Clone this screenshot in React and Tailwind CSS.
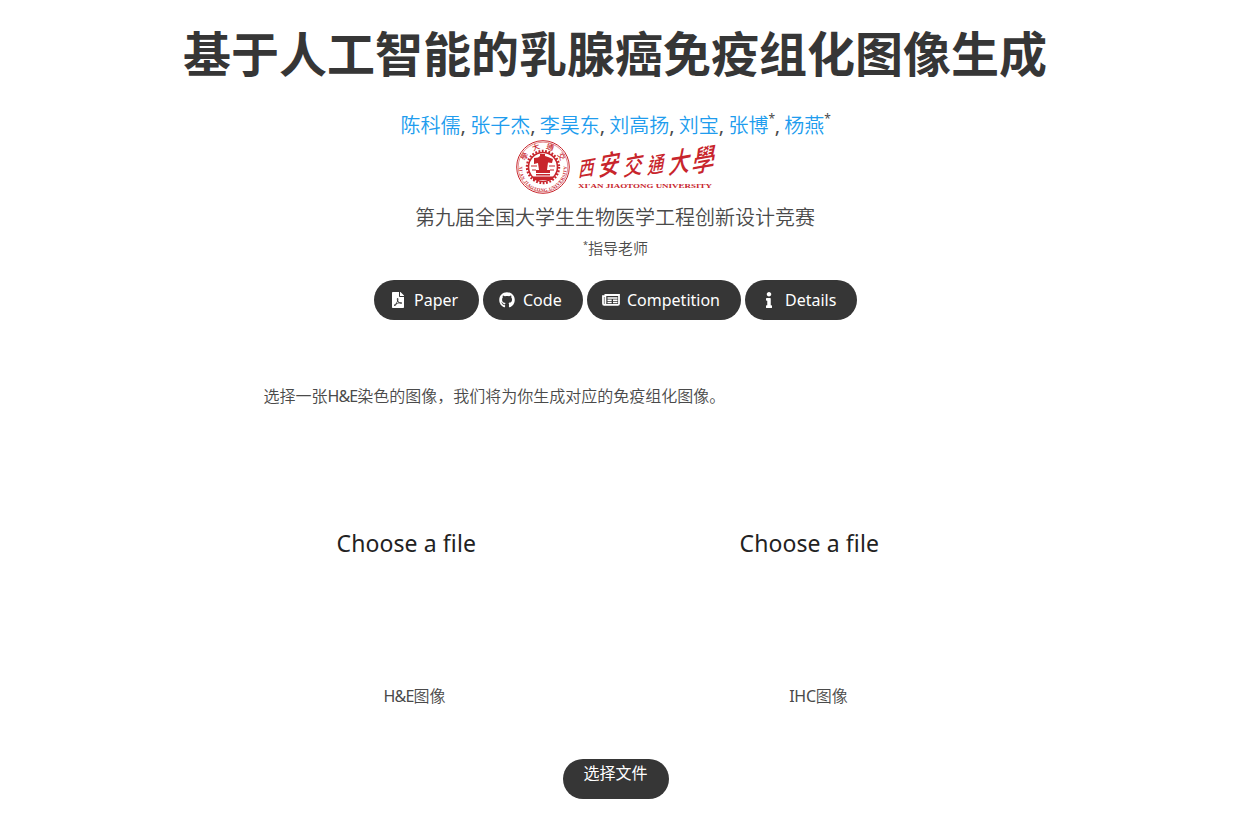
import { FaFilePdf, FaGithub, FaInfo } from "react-icons/fa";

function NewspaperIcon() {
  return (
    <svg width="18" height="16" viewBox="0 0 18 16" fill="none" stroke="currentColor">
      <path d="M3 4.2H1v7.3c0 .9.4 1.4 1.2 1.4h13.6c.8 0 1.2-.4 1.2-1.2V3H3.4v8.5c0 .9-.4 1.4-1.2 1.4" strokeWidth="1.8" />
      <path d="M5.5 5.9h10M5.5 8.3h4.2M11 8.3h4.5M5.5 10.6h4.2M11 10.6h4.5" strokeWidth="1.5" />
    </svg>
  );
}

const authors = [
  { name: "陈科儒" },
  { name: "张子杰" },
  { name: "李昊东" },
  { name: "刘高扬" },
  { name: "刘宝" },
  { name: "张博", mentor: true },
  { name: "杨燕", mentor: true },
];

const links = [
  { label: "Paper", Icon: FaFilePdf, width: "w-[105px]" },
  { label: "Code", Icon: FaGithub, width: "w-[100px]" },
  { label: "Competition", Icon: NewspaperIcon, width: "w-[154px]" },
  { label: "Details", Icon: FaInfo, width: "w-[112px]" },
];

const glyphs = [
  ["西", 62, 37, 20],
  ["安", 82, 36, 26],
  ["交", 107, 36, 24],
  ["通", 131, 34, 21],
  ["大", 152, 34, 27],
  ["學", 175, 33, 29],
];

function UniversityLogo() {
  return (
    <svg className="overflow-visible" width="204" height="54" viewBox="0 0 204 54" fill="#c8252c">
      <defs>
        <path id="sealTop" d="M8.5 27a18.5 18.5 0 0 1 37 0" />
        <path id="sealBottom" d="M3.7 23a23.8 23.8 0 1 0 46.6 0" />
      </defs>
      <circle cx="27" cy="27" r="26.3" fill="none" stroke="#c8252c" strokeWidth="1" />
      <circle cx="27" cy="27" r="24.8" fill="none" stroke="#c8252c" strokeWidth="0.5" />
      <circle cx="27" cy="27" r="16" fill="none" stroke="#c8252c" strokeWidth="2.4" strokeDasharray="1.8 1.55" />
      <circle cx="27" cy="27" r="14.5" fill="none" stroke="#c8252c" strokeWidth="1.6" />
      <path d="M18 18l4-.5 2-1.5v-2h5v2l3 1 5 2-1 4-4-.5-1 7.5h3v3H20v-3h3l-1-7-4 1z" />
      <path d="M20 34h14v1.5H20zM17 36.5h20V40H17z" />
      <path d="M15 26h6M33 26h6M16 30h4M34 30h4" stroke="#c8252c" strokeWidth="1.2" />
      <text fontFamily="'Noto Sans CJK TC', sans-serif" fontSize="7.5" fontWeight="500">
        <textPath href="#sealTop" startOffset="50%" textAnchor="middle" textLength="46">學大通交</textPath>
      </text>
      <text fontFamily="'Liberation Serif', serif" fontSize="4.6" fontWeight="700">
        <textPath href="#sealBottom" startOffset="50%" textAnchor="middle" textLength="78">XI'AN JIAOTONG UNIVERSITY</textPath>
      </text>
      <g fontFamily="'Liberation Serif', 'Noto Sans CJK TC', serif" fontWeight="500">
        {glyphs.map(([char, x, y, size]) => (
          <text key={char} fontSize={size} transform={`translate(${x} ${y}) rotate(-10) skewX(-20) scale(.8 1)`}>
            {char}
          </text>
        ))}
      </g>
      <text x="62" y="48.3" fontFamily="'Liberation Serif', serif" fontSize="7" fontWeight="700" textLength="134" lengthAdjust="spacingAndGlyphs">
        XI'AN JIAOTONG UNIVERSITY
      </text>
    </svg>
  );
}

function Preview({ children }) {
  return (
    <figure className="flex w-[403px] shrink-0 flex-col">
      <div className="flex h-[276px] items-center pl-[73px] pb-1.5 font-['Noto_Sans'] text-[23px] font-normal tracking-[0.1px] text-[#222]">
        <span className="whitespace-nowrap">Choose a file</span>
      </div>
      <figcaption className="w-[302px] text-center text-base leading-6">{children}</figcaption>
    </figure>
  );
}

export default function App() {
  return (
    <main className="flex h-[838px] w-[1231px] flex-col items-center overflow-hidden bg-white pt-6 font-['Noto_Sans','Noto_Sans_CJK_SC',sans-serif] text-[#4a4a4a]">
      <h1 className="h-[54px] whitespace-nowrap pr-px font-['Noto_Sans_CJK_SC',sans-serif] text-5xl font-bold leading-[54px] text-[#363636]">
        基于人工智能的乳腺癌免疫组化图像生成
      </h1>
      <p className="mt-[33px] h-[29px] whitespace-nowrap text-xl leading-[30px]">
        {authors.map(({ name, mentor }, i) => (
          <span key={name}>
            <a className="font-[350] text-[#209cee]">{name}</a>
            {mentor && <sup className="top-[-0.8em] text-xs tracking-[-0.4px]">*</sup>}
            {i < authors.length - 1 && <span className="tracking-[-0.5px]">, </span>}
          </span>
        ))}
      </p>
      <div className="h-[54px] pl-1">
        <UniversityLogo />
      </div>
      <p className="mt-[9px] h-[30px] whitespace-nowrap pr-px text-xl font-[350] leading-[30px]">
        第九届全国大学生生物医学工程创新设计竞赛
      </p>
      <p className="mt-[3px] h-6 whitespace-nowrap text-[15px] font-[350] leading-6">
        <sup className="top-[-0.7em] text-[9px] font-normal">*</sup>指导老师
      </p>
      <nav className="mt-5 flex gap-1">
        {links.map(({ label, Icon, width }) => (
          <a key={label} className={`flex h-10 items-center gap-1 rounded-full bg-[#363636] pl-3 font-['Noto_Sans'] text-base text-white ${width}`}>
            <span className="flex size-6 shrink-0 items-center justify-center">
              <Icon size={16} />
            </span>
            <span>{label}</span>
          </a>
        ))}
      </nav>
      <section className="mt-16 w-[704px] text-base font-[350]">
        <p className="h-6 leading-6">
          选择一张<span className="font-normal tracking-[-0.9px]">H&amp;E</span>染色的图像，我们将为你生成对应的免疫组化图像。
        </p>
      </section>
      <div className="flex w-[704px] font-[350]">
        <Preview>
          <span className="font-normal tracking-[-0.9px]">H&amp;E</span>图像
        </Preview>
        <Preview>
          <span className="pl-0.5">
            <span className="font-normal tracking-[-0.3px]">IHC</span>图像
          </span>
        </Preview>
      </div>
      <button className="mt-[51px] flex h-10 w-[106px] shrink-0 justify-center rounded-full bg-[#363636] pt-[2px] text-base leading-6 text-white">
        选择文件
      </button>
    </main>
  );
}
